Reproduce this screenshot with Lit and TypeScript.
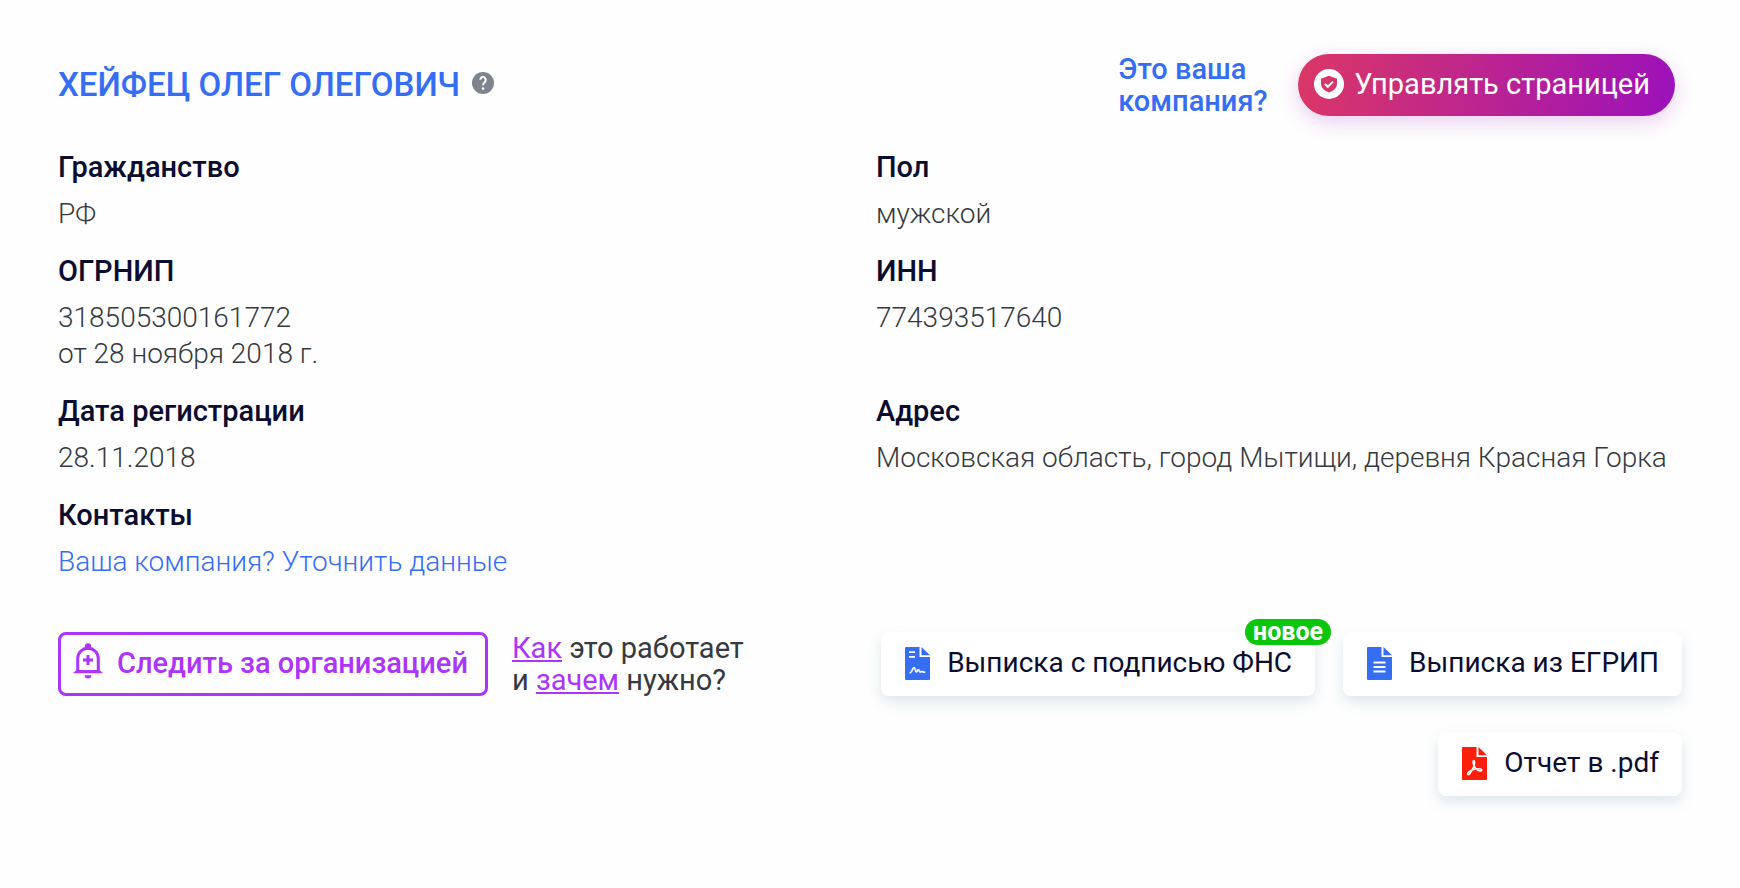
import { LitElement, html, css, svg } from "lit";
import { customElement } from "lit/decorators.js";

const helpIcon = html`<svg viewBox="0 0 22 22" width="22" height="22" aria-hidden="true">
  <circle cx="11" cy="11" r="11" fill="#7d848e" />
  <path d="M8.300 7.800a2.700 3 0 1 1 4.400 2.400c-1 .8-1.600 1.400-1.600 3" fill="none" stroke="#fff" stroke-width="2" />
  <circle cx="11.100" cy="16.600" r="1.300" fill="#fff" />
</svg>`;

const shieldIcon = html`<svg viewBox="0 0 30 30" width="30" height="30" aria-hidden="true">
  <circle cx="15" cy="15" r="15" fill="#fff" />
  <path d="M15 6.800 23 9.800v4.700c0 4.200-3.300 7.200-8 9-4.700-1.800-8-4.800-8-9V9.800z" fill="#d6366a" />
  <path d="m11 15 2.800 2.800 5.200-5.200" fill="none" stroke="#fff" stroke-width="2" />
</svg>`;

const bellIcon = html`<svg class="bell" viewBox="0 0 30 36" width="30" height="36" aria-hidden="true">
  <circle cx="15" cy="3.500" r="3.200" fill="#ac35f9" />
  <path d="M4.700 28V15.500a10.300 10.300 0 0 1 20.600 0V28" fill="none" stroke="#ac35f9" stroke-width="3" />
  <path d="M0 30.300 3.500 27h23l3.500 3.300zM11.700 32.300h6.600a3.300 3.200 0 0 1-6.600 0z" fill="#ac35f9" />
  <path d="M15 12v10M10 17h10" stroke="#ac35f9" stroke-width="3" />
</svg>`;

const sheet = (color: string, detail: unknown) => html`<svg viewBox="0 0 25 33" width="25" height="33" aria-hidden="true">
  <path d="M1 0H14.500V10H25V32a1 1 0 0 1-1 1H1A1 1 0 0 1 0 32V1A1 1 0 0 1 1 0z" fill=${color} />
  <path d="M16.500 0 25 8.300H16.500z" fill=${color} />
  ${detail}
</svg>`;

const signDetail = svg`<path d="M4 5.200h6M4 9.800h6" stroke="#fff" stroke-width="1.800" />
  <path d="M4.500 26c2.500 0 3-5.500 4.500-5.500S10 25 11.300 25s1-2.500 2-2.500.7 2.500 2 2.500 1.200-1 2-.600 1 1 3 .900" fill="none" stroke="#fff" stroke-width="1.700" />`;
const linesDetail = svg`<path d="M6.500 15.500h12M6.500 20h12M6.500 24.500h12" stroke="#fff" stroke-width="2" />`;
const pdfDetail = svg`<path d="M12 13.500c-1.500 0-.8 3.500.2 5.500 1.200 2.500 3.800 5 6 5 2.300 0 2-2.200-.7-2.200-4 0-9.500 1.500-11.500 4-1.300 1.700.6 2.600 2 .600C10 23.500 12.500 18.500 12.600 15.500c0-1.200-.1-2-.6-2z" fill="none" stroke="#fff" stroke-width="1.600" />`;

@customElement("app-root")
export class AppRoot extends LitElement {
  static styles = css`
    :host {
      display: block;
      background: #fefefe;
      color: #343a40;
      font: 300 28px/36px Roboto, "Noto Sans", sans-serif;
    }
    * { box-sizing: border-box; }
    a { color: #356df3; text-decoration: none; }
    button { font: inherit; cursor: pointer; white-space: nowrap; }
    svg { display: block; flex: none; }
    .card { min-height: 100vh; padding: 53px 58px; }
    .head { display: flex; align-items: center; justify-content: space-between; padding-right: 7px; }
    .name { display: flex; align-items: center; gap: 12px; }
    .title { margin: 0; font-size: 33px; font-weight: 500; color: #356df3; }
    .help { padding: 0 0 4px; border: 0; background: none; }
    .owner { display: flex; align-items: center; gap: 28px; }
    .claim { width: 152px; font-size: 29px; line-height: 32px; font-weight: 500; color: #356df3; }
    .manage {
      display: flex; align-items: center; gap: 10px; height: 62px; padding: 0 25px 2px 16px;
      border: 0; border-radius: 31px; color: #fff; font-size: 29px; font-weight: 400;
      background: linear-gradient(100deg, #db3766, #9b11bb);
      box-shadow: 0 6px 20px #9b11bb33;
    }
    .facts { display: grid; grid-template-columns: 1fr 1fr; gap: 21px 12px; margin: 32px 0 0; }
    .term { margin: 0 0 11px; font-size: 29px; font-weight: 500; color: #0b0d30; }
    .value { margin: 0; }
    .actions { display: grid; grid-template-columns: 1fr 1fr; gap: 12px; margin-top: 52px; }
    .watch { display: flex; align-items: flex-start; gap: 24px; }
    .follow {
      display: flex; align-items: center; gap: 14px; height: 64px; padding: 0 17px 2px 12px;
      border: 3px solid #ac35f9; border-radius: 8px; background: none; color: #ac35f9;
      font-size: 29px; font-weight: 500;
    }
    .bell { margin-bottom: 4px; }
    .hint { margin: 0; font-size: 29px; line-height: 32px; font-weight: 400; }
    .hint a { color: #ac35f9; text-decoration: underline; }
    .docs { display: flex; flex-wrap: wrap; justify-content: flex-end; gap: 36px 28px; }
    .doc {
      position: relative; display: flex; align-items: center; gap: 17px; height: 64px; padding: 0 23px 2px 24px;
      border: 0; border-radius: 8px; background: #fff; color: #0b0d30; font-weight: 400;
      box-shadow: 0 6px 14px #2f5f7a26;
    }
    .badge {
      position: absolute; top: -13px; right: -16px; height: 26px; padding: 0 8px; border-radius: 13px;
      background: #0cc60c; color: #fff; font-size: 25px; line-height: 26px; font-weight: 700;
    }
  `;

  private fact(term: string, value: unknown) {
    return html`<div><dt class="term">${term}</dt><dd class="value">${value}</dd></div>`;
  }

  render() {
    return html`<main class="card">
      <header class="head">
        <div class="name">
          <h1 class="title">ХЕЙФЕЦ ОЛЕГ ОЛЕГОВИЧ</h1>
          <button class="help" aria-label="?">${helpIcon}</button>
        </div>
        <div class="owner">
          <a class="claim" href="#claim">Это ваша компания?</a>
          <button class="manage">${shieldIcon}<span>Управлять страницей</span></button>
        </div>
      </header>
      <dl class="facts">
        ${this.fact("Гражданство", "РФ")}
        ${this.fact("Пол", "мужской")}
        ${this.fact("ОГРНИП", html`318505300161772<br />от 28 ноября 2018 г.`)}
        ${this.fact("ИНН", "774393517640")}
        ${this.fact("Дата регистрации", "28.11.2018")}
        ${this.fact("Адрес", "Московская область, город Мытищи, деревня Красная Горка")}
        ${this.fact("Контакты", html`<a href="#contacts">Ваша компания? Уточнить данные</a>`)}
      </dl>
      <section class="actions">
        <div class="watch">
          <button class="follow">${bellIcon}<span>Следить за организацией</span></button>
          <p class="hint"><a href="#how">Как</a> это работает<br />и <a href="#why">зачем</a> нужно?</p>
        </div>
        <div class="docs">
          <button class="doc">${sheet("#356df3", signDetail)}<span>Выписка с подписью ФНС</span><span class="badge">новое</span></button>
          <button class="doc">${sheet("#356df3", linesDetail)}<span>Выписка из ЕГРИП</span></button>
          <button class="doc">${sheet("#fc1f0c", pdfDetail)}<span>Отчет в .pdf</span></button>
        </div>
      </section>
    </main>`;
  }
}
